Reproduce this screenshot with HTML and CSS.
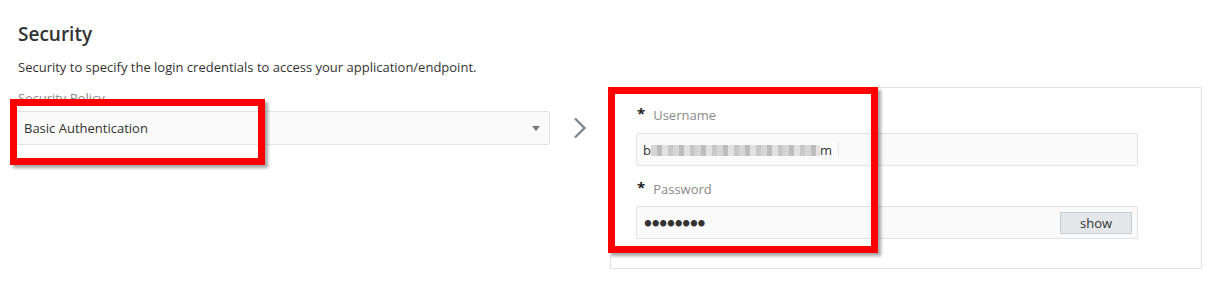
FILE: index.html
```html
<!DOCTYPE html>
<html lang="en">
<head>
    <meta charset="UTF-8">
    <meta name="viewport" content="width=device-width, initial-scale=1.0">
    <title>Security</title>
    <link rel="stylesheet" href="styles.css">
</head>
<body>
    <div class="section">
        <h1>Security</h1>
        <p class="desc">Security to specify the login credentials to access your application/endpoint.</p>

        <div class="row">
            <div class="policy">
                <label class="field-label">Security Policy</label>
                <div class="select">
                    <span>Basic Authentication</span>
                    <span class="caret"></span>
                </div>
            </div>

            <div class="arrow">
                <svg width="14" height="22" viewBox="0 0 14 22">
                    <path d="M2 1.5 L11.5 11 L2 20.5" fill="none" stroke="#7d8790" stroke-width="2.4"/>
                </svg>
            </div>

            <div class="panel">
                <div class="field-label"><span class="req">*</span>Username</div>
                <div class="input">
                    <span>b</span><span class="blur"></span><span>m</span><span class="ibeam"></span>
                </div>

                <div class="field-label second"><span class="req">*</span>Password</div>
                <div class="input">
                    <span class="dots">&bull;&bull;&bull;&bull;&bull;&bull;&bull;&bull;</span>
                    <button class="show">show</button>
                </div>
            </div>
        </div>
    </div>

    <div class="mark mark-policy"></div>
    <div class="mark mark-login"></div>
</body>
</html>
```

FILE: styles.css
```css
body {
    margin: 0;
    background: #fff;
    font-family: "Open Sans", "Noto Sans", sans-serif;
    color: #333;
}
.section {
    padding: 22px 0 0 15px;
}
h1 {
    margin: 0;
    padding-left: 3px;
    font-size: 19px;
    line-height: 24px;
    font-weight: 600;
    color: #333;
}
.desc {
    margin: 12px 0 0;
    padding-left: 3px;
    font-size: 13px;
    line-height: 18px;
}
.row {
    display: flex;
    margin-top: 11px;
}
.policy {
    width: 535px;
    padding-top: 2px;
}
.field-label {
    display: block;
    padding-left: 3px;
    font-size: 13px;
    line-height: 18px;
    color: #8a8a8a;
}
.select {
    display: flex;
    align-items: center;
    justify-content: space-between;
    box-sizing: border-box;
    height: 34px;
    margin-top: 4px;
    padding: 0 9px 0 8px;
    background: #fafafa;
    border: 1px solid #e3e3e3;
    border-radius: 2px;
    font-size: 13px;
}
.caret {
    width: 0;
    height: 0;
    border-left: 4px solid transparent;
    border-right: 4px solid transparent;
    border-top: 5px solid #777;
}
.arrow {
    width: 60px;
    display: flex;
    justify-content: center;
    padding-top: 30px;
}
.panel {
    box-sizing: border-box;
    width: 592px;
    padding: 18px 0 29px 25px;
    border: 1px solid #e2e2e2;
}
.panel .field-label {
    display: flex;
    align-items: center;
    height: 18px;
    padding-left: 1px;
}
.req {
    color: #222;
    font-weight: bold;
    font-size: 15px;
    line-height: 1;
    margin: 0 8px 4px 0;
}
.second {
    margin-top: 14px;
}
.input {
    display: flex;
    align-items: center;
    box-sizing: border-box;
    width: 502px;
    height: 33px;
    margin-top: 9px;
    padding: 0 5px 0 6px;
    background: #fafafa;
    border: 1px solid #e3e3e3;
    border-radius: 2px;
    font-size: 13px;
    color: #333;
}
.second + .input {
    margin-top: 8px;
}
.blur {
    display: inline-block;
    width: 169px;
    height: 11px;
    margin-top: 2px;
    background:
        repeating-linear-gradient(90deg, #d6d6d6 0 6px, #bdbdbd 6px 11px, #e2e2e2 11px 17px, #c8c8c8 17px 22px);
}
.ibeam {
    display: inline-block;
    width: 1px;
    height: 13px;
    margin-left: 6px;
    background: #e6e6e6;
}
.dots {
    flex: 1;
    font-family: Lato, sans-serif;
    font-size: 17px;
    letter-spacing: -2.2px;
    color: #333;
}
.show {
    width: 72px;
    height: 22px;
    padding: 0;
    background: #e4e7ea;
    border: 1px solid #c6cdd3;
    border-radius: 1px;
    font-family: inherit;
    font-size: 13px;
    color: #333;
}
.mark {
    position: absolute;
    border: 7px solid #ff0000;
    box-shadow: 3px 3px 3px rgba(0, 0, 0, 0.35);
}
.mark-policy {
    left: 10px;
    top: 99px;
    width: 241px;
    height: 52px;
}
.mark-login {
    left: 608px;
    top: 87px;
    width: 256px;
    height: 152px;
}
```
